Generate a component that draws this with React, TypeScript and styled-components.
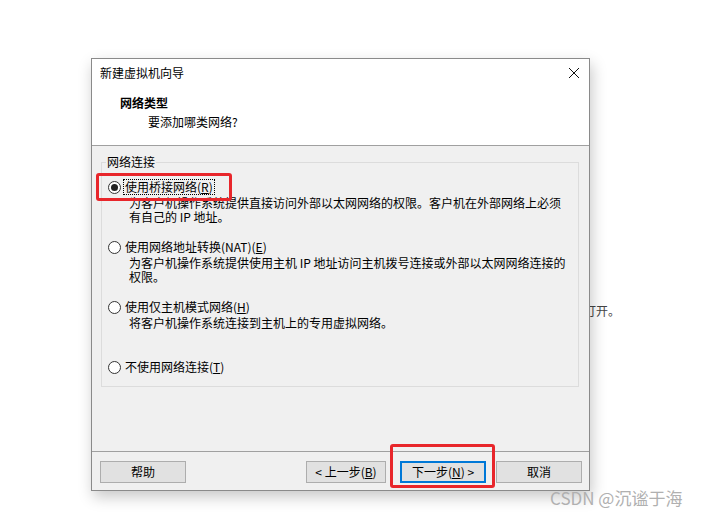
import React from "react";
import styled, { createGlobalStyle } from "styled-components";

const Global = createGlobalStyle`
  html, body { margin: 0; padding: 0; background: #ffffff; }
  body { font-family: "Noto Sans CJK SC", "Noto Sans", sans-serif; font-size: 12px; color: #000; }
  * { box-sizing: border-box; }
`;

const Stage = styled.div`
  position: relative;
  width: 701px;
  height: 518px;
  overflow: hidden;
  padding: 58px 0 0 91px;
`;

const BehindText = styled.div`
  position: absolute;
  left: 584px;
  top: 303px;
  font-size: 12px;
  line-height: 16px;
  color: #444;
`;

const Dialog = styled.div`
  position: relative;
  width: 499px;
  height: 433px;
  border: 1px solid #8a8a8a;
  background: #f0f0f0;
  display: flex;
  flex-direction: column;
  box-shadow: 2px 6px 14px rgba(0, 0, 0, 0.22);
`;

const Header = styled.div`
  height: 87px;
  background: #ffffff;
  border-bottom: 1px solid #a0a0a0;
  padding-top: 6px;
  display: flex;
  flex-direction: column;
`;

const TitleRow = styled.div`
  display: flex;
  align-items: center;
  justify-content: space-between;
  height: 16px;
  padding: 0 9px 0 8px;
`;

const Title = styled.span`
  font-size: 12px;
  line-height: 16px;
  color: #000;
`;

const CloseBtn = styled.svg`
  width: 12px;
  height: 12px;
  display: block;
`;

const Heading = styled.div`
  margin-top: 14px;
  padding-left: 28px;
  font-weight: bold;
  font-size: 12px;
  line-height: 16px;
`;

const SubHeading = styled.div`
  margin-top: 3px;
  padding-left: 56px;
  font-size: 12px;
  line-height: 16px;
`;

const Body = styled.div`
  flex: 1;
  padding: 9px 10px 0 9px;
`;

const Group = styled.fieldset`
  margin: 0;
  padding: 0 0 12px 6px;
  border: 1px solid #dcdcdc;
  min-width: 0;
`;

const Legend = styled.legend`
  margin-left: -2px;
  padding: 0 1px;
  font-size: 12px;
  line-height: 14px;
  color: #000;
`;

const Options = styled.div`
  display: flex;
  flex-direction: column;
  gap: 16px;
  padding-top: 11px;
`;

const Option = styled.div`
  display: flex;
  flex-direction: column;
`;

const RadioRow = styled.div`
  display: flex;
  align-items: center;
  height: 14px;
`;

const RadioCircle = styled.span<{ $checked?: boolean }>`
  width: 13px;
  height: 13px;
  border-radius: 50%;
  border: 1px solid #333;
  background: #fff;
  display: flex;
  align-items: center;
  justify-content: center;
  margin-right: 2px;
  flex-shrink: 0;
  &::after {
    content: "";
    display: ${(p) => (p.$checked ? "block" : "none")};
    width: 7px;
    height: 7px;
    border-radius: 50%;
    background: #222;
  }
`;

const Label = styled.span<{ $focused?: boolean }>`
  font-size: 12px;
  line-height: 14px;
  padding: 0 1px;
  border: 1px dotted ${(p) => (p.$focused ? "#000" : "transparent")};
  white-space: nowrap;
`;

const Desc = styled.div`
  margin-top: 2px;
  min-height: 28px;
  padding-left: 21px;
  font-size: 12px;
  line-height: 14px;
  width: 460px;
`;

const Footer = styled.div`
  height: 39px;
  border-top: 1px solid #a0a0a0;
  display: flex;
  align-items: flex-start;
  padding: 9px 7px 0 8px;
`;

const Button = styled.button<{ $w?: number; $default?: boolean; $ml?: number }>`
  width: ${(p) => p.$w ?? 86}px;
  height: 22px;
  margin-left: ${(p) => p.$ml ?? 0}px;
  background: #e1e1e1;
  border: ${(p) => (p.$default ? "2px solid #0078d7" : "1px solid #adadad")};
  font-family: "Noto Sans CJK SC", "Noto Sans", sans-serif;
  font-size: 12px;
  line-height: 14px;
  color: #000;
  padding: 0;
  display: flex;
  align-items: center;
  justify-content: center;
`;

const Spacer = styled.div`
  flex: 1;
`;

const Annotation = styled.div`
  position: absolute;
  border: 3px solid #e8262b;
  border-radius: 3px;
  pointer-events: none;
`;

const Watermark = styled.div`
  position: absolute;
  left: 550px;
  top: 487px;
  font-family: "Noto Sans CJK SC", "Noto Sans", sans-serif;
  font-size: 17px;
  line-height: 22px;
  color: #b0b0b0;
  white-space: nowrap;
`;

const options = [
  {
    label: "使用桥接网络",
    key: "R",
    checked: true,
    desc: "为客户机操作系统提供直接访问外部以太网网络的权限。客户机在外部网络上必须有自己的 IP 地址。",
  },
  {
    label: "使用网络地址转换(NAT)",
    key: "E",
    checked: false,
    desc: "为客户机操作系统提供使用主机 IP 地址访问主机拨号连接或外部以太网网络连接的权限。",
  },
  {
    label: "使用仅主机模式网络",
    key: "H",
    checked: false,
    desc: "将客户机操作系统连接到主机上的专用虚拟网络。",
  },
  {
    label: "不使用网络连接",
    key: "T",
    checked: false,
    desc: "",
  },
];

export default function App() {
  return (
    <>
      <Global />
      <Stage>
        <BehindText>打开。</BehindText>
        <Dialog>
          <Header>
            <TitleRow>
              <Title>新建虚拟机向导</Title>
              <CloseBtn viewBox="0 0 12 12">
                <path d="M1 1 L11 11 M11 1 L1 11" stroke="#111" strokeWidth="1" fill="none" />
              </CloseBtn>
            </TitleRow>
            <Heading>网络类型</Heading>
            <SubHeading>要添加哪类网络?</SubHeading>
          </Header>
          <Body>
            <Group>
              <Legend>网络连接</Legend>
              <Options>
                {options.map((o) => (
                  <Option key={o.key}>
                    <RadioRow>
                      <RadioCircle $checked={o.checked} />
                      <Label $focused={o.checked}>
                        {o.label}(<u>{o.key}</u>)
                      </Label>
                    </RadioRow>
                    {o.desc && <Desc>{o.desc}</Desc>}
                  </Option>
                ))}
              </Options>
            </Group>
          </Body>
          <Footer>
            <Button>帮助</Button>
            <Spacer />
            <Button $w={80}>
              &lt; 上一步(<u>B</u>)
            </Button>
            <Button $ml={14} $default>
              下一步(<u>N</u>) &gt;
            </Button>
            <Button $ml={10}>取消</Button>
          </Footer>
        </Dialog>
        <Annotation style={{ left: 96, top: 173, width: 136, height: 28 }} />
        <Annotation style={{ left: 390, top: 444, width: 105, height: 44 }} />
        <Watermark>CSDN @沉谧于海</Watermark>
      </Stage>
    </>
  );
}
